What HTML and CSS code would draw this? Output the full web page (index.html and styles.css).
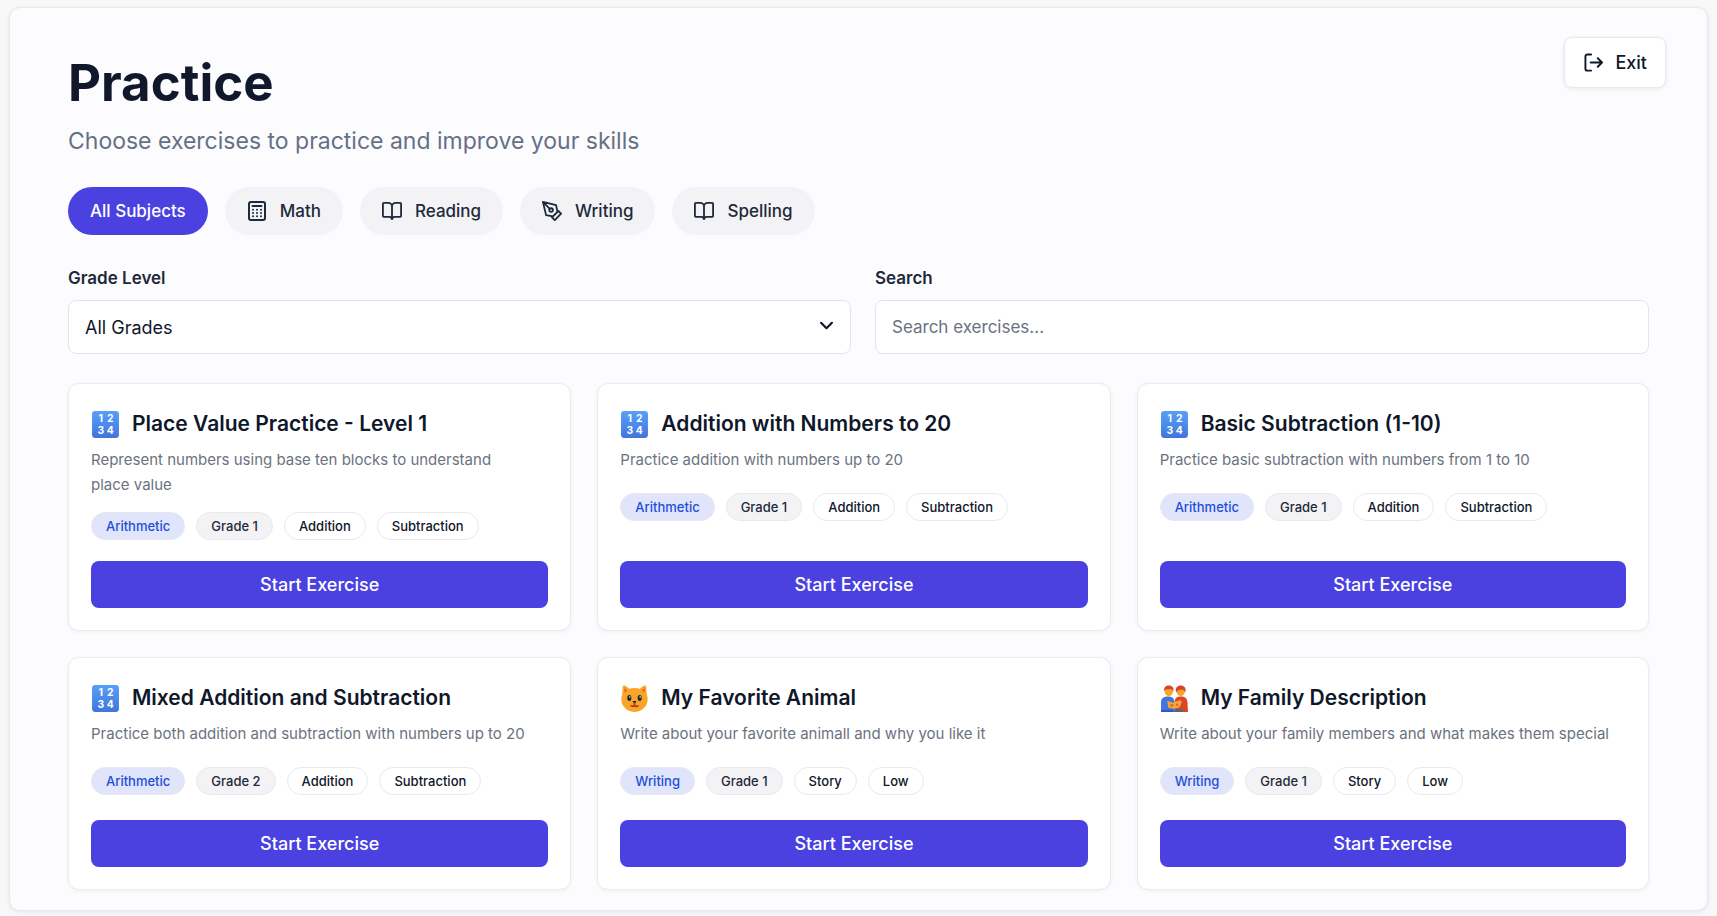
FILE: index.html
```html
<!DOCTYPE html>
<html lang="en">
<head>
<meta charset="utf-8">
<meta name="viewport" content="width=device-width, initial-scale=1">
<title>Practice</title>
<link rel="stylesheet" href="styles.css">
</head>
<body>
<svg class="sprite" aria-hidden="true">
  <symbol id="i-calc" viewBox="0 0 20 20">
    <rect x="2" y="1" width="16" height="18" rx="2"/>
    <path d="M5.500 5h9"/>
    <path d="M6 8.700h.01M10 8.700h.01M14 8.700h.01M6 12h.01M10 12h.01M14 12h.01M6 15.300h.01M10 15.300h.01M14 15.300h.01"/>
  </symbol>
  <symbol id="i-book" viewBox="1 1 22 22">
    <path d="M12 7v14M3 18.500a1 1 0 0 1-1-1V4a1 1 0 0 1 1-1h5a4 4 0 0 1 4 4 4 4 0 0 1 4-4h5a1 1 0 0 1 1 1v13.500a1 1 0 0 1-1 1h-6a3 3 0 0 0-3 2.500 3 3 0 0 0-3-2.500z"/>
  </symbol>
  <symbol id="i-pen" viewBox="1 1 22 22">
    <path d="m12 19 7-7 3 3-7 7-3-3zM18 13l-1.500-7.500L2 2l3.500 14.500L13 18l5-5zM2 2l7.586 7.586"/>
    <circle cx="11" cy="11" r="2"/>
  </symbol>
  <symbol id="i-exit" viewBox="0 0 20 20">
    <path d="M7.500 1.500H3.500a2 2 0 0 0-2 2v13a2 2 0 0 0 2 2h4M7 10h12M14.500 5.500 19 10l-4.500 4.500"/>
  </symbol>
  <symbol id="i-chevron" viewBox="0 0 12 8">
    <path d="m1 1.500 5 5 5-5"/>
  </symbol>
  <symbol id="e-cat" viewBox="0 0 28 28">
    <path fill="#f9a628" d="M2.500 3.500C2.700 1.300 4 1 5.500 2L9 4.500q5-1.500 10 0L22.500 2c1.500-1 2.800-.7 3 1.500l.3 6.500c1.500 3.500 1.200 8-.8 11-2.500 3.700-6.500 6-11 6S5.500 24.700 3 21c-2-3-2.300-7.500-.8-11z"/>
    <path fill="#e2622a" d="M4 4l3 2-2.500 2.500zM24 4l-3 2 2.500 2.500z"/>
    <ellipse cx="9" cy="13.500" rx="2" ry="2.800" fill="#1c2740"/><ellipse cx="19" cy="13.500" rx="2" ry="2.800" fill="#1c2740"/>
    <circle cx="9.500" cy="12.500" r=".7" fill="#fff"/><circle cx="19.500" cy="12.500" r=".7" fill="#fff"/>
    <path fill="#1c2740" d="M12 16.500h4l-2 3z"/>
    <path fill="none" stroke="#b8322a" stroke-width="1.500" stroke-linecap="round" d="M10.500 21q2 1.500 3.500-.5 1.500 2 3.500.5M14 18.500v2"/>
  </symbol>
  <symbol id="e-family" viewBox="0 0 28 28">
    <path fill="#4276dc" d="M1 27V17.500C1 13.500 4 12 8 12s6 2 6 6v9z"/>
    <path fill="#dc4429" d="M14 27v-9c0-4 2-6 6-6s6 1.500 6.500 5.500L27 27z"/>
    <circle cx="8.500" cy="7.500" r="4" fill="#f9a628"/><circle cx="20" cy="7.500" r="4" fill="#f9a628"/>
    <path fill="#d9432b" d="M4 7c-.5-4 2-5.500 4.500-5.500S13.500 3 13 7l-2-2H6zM15.500 8c-1-4.500 1.500-6.500 4.500-6.500S25.500 3.500 24.500 8L22.500 5.500h-4z"/>
    <path fill="#f6a436" d="M7 16l5 2 3-1 5-1.500 1 2-2 5-5 1.500-6-1z"/>
    <path fill="#c8702c" d="M10 19.500h3v2h-3zM15.500 19h2v2h-2z"/>
    <path fill="#5e6075" d="M14 24h8v3h-8z"/><path fill="#2f5bb5" d="M1 25h12v2H1z"/>
  </symbol>
  <defs>
    <linearGradient id="blue" x1="0" y1="0" x2="0" y2="1"><stop offset="0" stop-color="#56a1f8"/><stop offset="1" stop-color="#4274dc"/></linearGradient>
  </defs>
</svg>

<div class="panel">
  <header class="header">
    <div class="heading">
      <h1 class="title">Practice</h1>
      <p class="subtitle">Choose exercises to practice and improve your skills</p>
    </div>
    <button class="exit" type="button"><svg class="icon icon-exit" aria-hidden="true"><use href="#i-exit"/></svg>Exit</button>
  </header>

  <main class="content">
    <nav class="subjects" aria-label="Subjects">
      <button class="subject active" type="button">All Subjects</button>
      <button class="subject" type="button"><svg class="icon" aria-hidden="true"><use href="#i-calc"/></svg>Math</button>
      <button class="subject" type="button"><svg class="icon" aria-hidden="true"><use href="#i-book"/></svg>Reading</button>
      <button class="subject" type="button"><svg class="icon" aria-hidden="true"><use href="#i-pen"/></svg>Writing</button>
      <button class="subject" type="button"><svg class="icon" aria-hidden="true"><use href="#i-book"/></svg>Spelling</button>
    </nav>

    <div class="filters">
      <div class="field">
        <label class="label" for="grade">Grade Level</label>
        <div class="select-wrap">
          <select class="control" id="grade"><option>All Grades</option><option>Grade 1</option><option>Grade 2</option></select>
          <svg class="chevron" aria-hidden="true"><use href="#i-chevron"/></svg>
        </div>
      </div>
      <div class="field">
        <label class="label" for="search">Search</label>
        <input class="control search" id="search" type="text" placeholder="Search exercises...">
      </div>
    </div>

    <section class="cards" aria-label="Exercises">
      <article class="card">
        <h2 class="card-title"><svg class="emoji" viewBox="0 0 28 28" aria-hidden="true"><rect x="1" y="1" width="26" height="26" rx="3" fill="url(#blue)"/><text x="9.500" y="12" class="digit">1</text><text x="18.500" y="12" class="digit">2</text><text x="9.500" y="23" class="digit">3</text><text x="18.500" y="23" class="digit">4</text></svg>Place Value Practice - Level 1</h2>
        <p class="desc">Represent numbers using base ten blocks to understand place value</p>
        <div class="tags"><span class="tag topic">Arithmetic</span><span class="tag grade">Grade 1</span><span class="tag">Addition</span><span class="tag">Subtraction</span></div>
        <button class="start" type="button">Start Exercise</button>
      </article>
      <article class="card">
        <h2 class="card-title"><svg class="emoji" viewBox="0 0 28 28" aria-hidden="true"><rect x="1" y="1" width="26" height="26" rx="3" fill="url(#blue)"/><text x="9.500" y="12" class="digit">1</text><text x="18.500" y="12" class="digit">2</text><text x="9.500" y="23" class="digit">3</text><text x="18.500" y="23" class="digit">4</text></svg>Addition with Numbers to 20</h2>
        <p class="desc">Practice addition with numbers up to 20</p>
        <div class="tags"><span class="tag topic">Arithmetic</span><span class="tag grade">Grade 1</span><span class="tag">Addition</span><span class="tag">Subtraction</span></div>
        <button class="start" type="button">Start Exercise</button>
      </article>
      <article class="card">
        <h2 class="card-title"><svg class="emoji" viewBox="0 0 28 28" aria-hidden="true"><rect x="1" y="1" width="26" height="26" rx="3" fill="url(#blue)"/><text x="9.500" y="12" class="digit">1</text><text x="18.500" y="12" class="digit">2</text><text x="9.500" y="23" class="digit">3</text><text x="18.500" y="23" class="digit">4</text></svg>Basic Subtraction (1-10)</h2>
        <p class="desc">Practice basic subtraction with numbers from 1 to 10</p>
        <div class="tags"><span class="tag topic">Arithmetic</span><span class="tag grade">Grade 1</span><span class="tag">Addition</span><span class="tag">Subtraction</span></div>
        <button class="start" type="button">Start Exercise</button>
      </article>
      <article class="card">
        <h2 class="card-title"><svg class="emoji" viewBox="0 0 28 28" aria-hidden="true"><rect x="1" y="1" width="26" height="26" rx="3" fill="url(#blue)"/><text x="9.500" y="12" class="digit">1</text><text x="18.500" y="12" class="digit">2</text><text x="9.500" y="23" class="digit">3</text><text x="18.500" y="23" class="digit">4</text></svg>Mixed Addition and Subtraction</h2>
        <p class="desc">Practice both addition and subtraction with numbers up to 20</p>
        <div class="tags"><span class="tag topic">Arithmetic</span><span class="tag grade">Grade 2</span><span class="tag">Addition</span><span class="tag">Subtraction</span></div>
        <button class="start" type="button">Start Exercise</button>
      </article>
      <article class="card">
        <h2 class="card-title"><svg class="emoji" aria-hidden="true"><use href="#e-cat"/></svg>My Favorite Animal</h2>
        <p class="desc">Write about your favorite animall and why you like it</p>
        <div class="tags"><span class="tag topic">Writing</span><span class="tag grade">Grade 1</span><span class="tag">Story</span><span class="tag">Low</span></div>
        <button class="start" type="button">Start Exercise</button>
      </article>
      <article class="card">
        <h2 class="card-title"><svg class="emoji" aria-hidden="true"><use href="#e-family"/></svg>My Family Description</h2>
        <p class="desc">Write about your family members and what makes them special</p>
        <div class="tags"><span class="tag topic">Writing</span><span class="tag grade">Grade 1</span><span class="tag">Story</span><span class="tag">Low</span></div>
        <button class="start" type="button">Start Exercise</button>
      </article>
    </section>
  </main>
</div>
</body>
</html>
```
FILE: styles.css
```css
*, *::before, *::after { box-sizing: border-box; }

body {
  margin: 0;
  padding: 7px 9px 4px;
  background: #f8f8f9;
  color: #0f172a;
  font-family: Inter, "Liberation Sans", sans-serif;
}

h1, h2, p { margin: 0; }

button, input, select { font: inherit; color: inherit; }

button { cursor: pointer; }

.sprite { position: absolute; width: 0; height: 0; }

.panel {
  background: #fcfcfe;
  border: 1px solid #e8e9ee;
  border-radius: 11px;
  box-shadow: 0 1px 4px rgba(15, 23, 42, 0.08);
  padding-bottom: 20px;
}

.header {
  display: flex;
  justify-content: space-between;
  align-items: flex-start;
  padding: 29px 41px 0 58px;
}

.heading { padding-top: 16px; }

.title {
  font-size: 51px;
  line-height: 60px;
  font-weight: 700;
  color: #12182c;
}

.subtitle {
  margin-top: 12px;
  font-size: 23px;
  line-height: 32px;
  color: #667085;
}

.exit {
  display: flex;
  align-items: center;
  gap: 12px;
  height: 51px;
  padding: 0 18px 0 19px;
  background: #fff;
  border: 1px solid #e8e9ee;
  border-radius: 8px;
  box-shadow: 0 1px 4px rgba(15, 23, 42, 0.08);
  font-size: 18px;
  font-weight: 500;
}

.content { padding: 30px 58px 0; }

.icon {
  width: 20px;
  height: 20px;
  fill: none;
  stroke: currentColor;
  stroke-width: 2;
  stroke-linecap: round;
  stroke-linejoin: round;
}

.icon-exit { width: 19px; height: 19px; }

.subjects {
  display: flex;
  flex-wrap: wrap;
  gap: 17px;
}

.subject {
  display: flex;
  align-items: center;
  gap: 13px;
  height: 48px;
  padding: 0 22px;
  border: 0;
  border-radius: 24px;
  background: #f3f3f5;
  color: #1e293b;
  font-size: 17px;
  font-weight: 500;
}

.subject.active { background: #4a41e0; color: #fff; }

.filters {
  display: grid;
  grid-template-columns: 783fr 774fr;
  gap: 24px;
  margin-top: 31px;
}

.label {
  display: block;
  margin-bottom: 10px;
  font-size: 17px;
  line-height: 24px;
  font-weight: 600;
  color: #1e293b;
}

.select-wrap { position: relative; }

.control {
  display: block;
  width: 100%;
  height: 54px;
  padding: 0 16px;
  background: #fff;
  border: 1px solid #e3e4ea;
  border-radius: 8px;
  font-size: 18px;
  appearance: none;
}

.search { font-size: 17px; }

.control::placeholder { color: #6b7280; opacity: 1; }

.chevron {
  position: absolute;
  right: 18px;
  top: 21px;
  width: 13px;
  height: 9px;
  fill: none;
  stroke: #0f172a;
  stroke-width: 2;
  stroke-linecap: round;
  stroke-linejoin: round;
  pointer-events: none;
}

.cards {
  display: grid;
  grid-template-columns: 503fr 513fr 512fr;
  gap: 26px;
  margin-top: 29px;
}

.card {
  display: flex;
  flex-direction: column;
  min-height: 233px;
  padding: 22px;
  background: #fff;
  border: 1px solid #ebecf0;
  border-radius: 11px;
  box-shadow: 0 1px 4px rgba(15, 23, 42, 0.05);
}

.card-title {
  display: flex;
  align-items: center;
  gap: 12px;
  font-size: 21px;
  line-height: 36px;
  font-weight: 600;
}

.emoji { flex: none; width: 29px; height: 29px; }

.digit {
  font-size: 10px;
  font-weight: 700;
  fill: #fff;
  text-anchor: middle;
}

.desc {
  min-height: 31px;
  margin-top: 5px;
  font-size: 15px;
  line-height: 25px;
  text-wrap: pretty;
  color: #6b7280;
}

.tags {
  display: flex;
  flex-wrap: wrap;
  gap: 11px;
  margin: 15px 0 21px;
}

.tag {
  padding: 0 14px;
  border: 1px solid #e8e9ee;
  border-radius: 14px;
  font-size: 13px;
  line-height: 26px;
  font-weight: 500;
}

.topic { background: #e0e5fc; color: #1d4ed8; }

.grade { background: #f3f3f5; color: #1e293b; }

.start {
  height: 47px;
  margin-top: auto;
  border: 0;
  border-radius: 8px;
  background: #4a41e0;
  color: #fff;
  font-size: 18px;
  font-weight: 500;
}
```
